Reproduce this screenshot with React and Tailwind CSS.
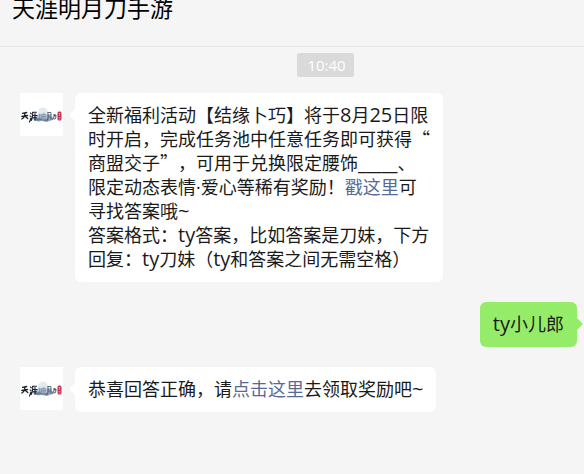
const FONT = "font-['Open_Sans','Noto_Sans_CJK_SC',sans-serif]";

function Cjk({ children }) {
  return <span className="leading-none font-['Noto_Sans_CJK_SC',sans-serif]">{children}</span>;
}

function Latin({ children }) {
  return <span className="text-[20px] leading-none">{children}</span>;
}

function Avatar() {
  return (
    <svg viewBox="0 0 43 43" className="size-[43px] shrink-0 bg-white" role="img" aria-label="天涯明月刀">
      <defs>
        <linearGradient id="mist" x1="0" y1="0" x2="0" y2="1">
          <stop offset="0" stopColor="#c3d1e0" />
          <stop offset="1" stopColor="#6f88a6" />
        </linearGradient>
      </defs>
      <circle cx="23" cy="19.500" r="5" fill="#e3eaf0" />
      <path d="M9 26l4-2 3-1 3-3 2 1 3-2 2 2 3 1 3 2 4 2-4 1-5 2-5-1-4 .5-4-2z" fill="url(#mist)" opacity=".8" />
      <path d="M14 26q6-1.500 8 0t9-1l-5 3-5-1-4 .8z" fill="#48617f" opacity=".7" />
      <g fill="none" stroke="#1b2029" strokeLinecap="round">
        <path d="M2.500 20.300l4.200-.8M1.800 23.300l5.700-.8M4.800 20.500q0 4-3 5.500M4.800 23l3 2.500" strokeWidth="1.300" />
        <path d="M10.500 20l.8.8M10 23l1 .5M9.500 29l1.500-4M12.500 19.300h4M12.800 19.500q0 5-1.500 8M15 20.500v7M13.500 22.500h3.500M13.500 24.800h3" strokeWidth="1.100" />
        <path d="M19.500 22v3.500M19.500 22h2v3h-2M23 21.500v4M23 21.500h2v4M23 23.500h2" strokeWidth=".5" stroke="#6b7a8d" />
        <path d="M28 19.500v5q0 2-1 3M28 19.500h3v7.500M28 22h3M28 24h3" strokeWidth=".7" stroke="#343f50" />
        <path d="M33.500 22h2.500q0 3-1 4M34.500 22q0 3-2 4" strokeWidth=".8" />
      </g>
      <rect x="37.500" y="18.500" width="4" height="9" rx="1.500" fill="#c4304f" />
      <path d="M38.700 20.500h1.700M39.500 20v3M38.700 24.500h1.700M38.700 26h1.700" stroke="#f3c3cc" strokeWidth=".6" />
    </svg>
  );
}

function Incoming({ children }) {
  return (
    <div className="flex items-start pl-5">
      <Avatar />
      <div className="relative ml-3 rounded-md bg-white px-[13px] pt-[10px] pb-[11px]">
        <svg viewBox="0 0 7 14" className="absolute top-[15px] -left-[6px] h-[14px] w-[7px]" aria-hidden="true">
          <path d="M7 0L1 6Q0 7 1 8L7 14z" fill="#fff" />
        </svg>
        <p className="whitespace-nowrap">{children}</p>
      </div>
    </div>
  );
}

function TextLink({ children }) {
  return <a href="#" className="text-[#576b95]">{children}</a>;
}

export default function App() {
  return (
    <div lang="zh-CN" className={`min-h-screen overflow-hidden bg-[#f5f5f5] text-[18px] leading-6 text-[#1a1a1a] [text-spacing-trim:space-all] ${FONT}`}>
      <header className="-mt-2 border-b border-[#e5e5e5] px-3 pb-[22px]">
        <h1 className="text-[23px] leading-8 text-black">天涯明月刀手游</h1>
      </header>
      <main>
        <div className="flex justify-center pt-[6px] pl-[67px]">
          <time className="rounded-[2px] bg-[#dadada] pr-2 pl-[10px] text-[15px] text-white">10:40</time>
        </div>
        <div className="pt-4">
          <Incoming>
            全新福利活动【结缘卜巧】将于<Latin>8</Latin>月<Latin>25</Latin>日限<br />
            时开启，完成任务池中任意任务即可获得<Cjk>“</Cjk><br />
            商盟交子<Cjk>”，</Cjk>可用于兑换限定腰饰_____、<br />
            限定动态表情·爱心等稀有奖励！<TextLink>戳这里</TextLink>可<br />
            寻找答案哦<Latin>~</Latin><br />
            答案格式：<Latin>ty</Latin>答案，比如答案是刀妹，下方<br />
            回复：<Latin>ty</Latin>刀妹（<Latin>ty</Latin>和答案之间无需空格）
          </Incoming>
        </div>
        <div className="flex justify-end pt-5 pr-[7px]">
          <div className="relative rounded-md bg-[#95ec69] px-[13px] pt-[10px] pb-[11px]">
            <svg viewBox="0 0 7 14" className="absolute top-[15px] -right-[6px] h-[14px] w-[7px]" aria-hidden="true">
              <path d="M0 0L6 6Q7 7 6 8L0 14z" fill="#95ec69" />
            </svg>
            <p><Latin>ty</Latin>小儿郎</p>
          </div>
        </div>
        <div className="pt-5">
          <Incoming>
            恭喜回答正确，请<TextLink>点击这里</TextLink>去领取奖励吧<Latin>~</Latin>
          </Incoming>
        </div>
      </main>
    </div>
  );
}
